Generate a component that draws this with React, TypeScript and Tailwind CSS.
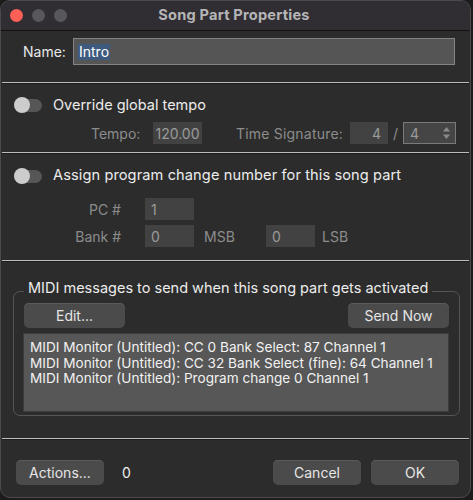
import React from "react";

const font = { fontFamily: "Inter, 'Noto Sans', sans-serif" };

function Toggle() {
    return (
        <div className="relative w-[28px] h-[16px] flex items-center">
            <div className="w-[28px] h-[13px] rounded-full bg-[#565656]" />
            <div className="absolute left-0 top-0 w-[16px] h-[16px] rounded-full bg-[#cdcdcd]" />
        </div>
    );
}

function Separator() {
    return <div className="h-[2px] border-t border-t-[#bdbdbd] border-b border-b-[#1c1c1c] mx-[1px]" />;
}

function Field({ value, className }: { value: string; className: string }) {
    return (
        <div className={`h-[22px] bg-[#424242] text-[#9a9a9a] text-[14px] flex items-center ${className}`}>
            {value}
        </div>
    );
}

function Button({ label, className }: { label: string; className: string }) {
    return (
        <button className={`h-[25px] rounded-[5px] bg-[#4b4b4b] text-[#e6e6e6] text-[14px] flex items-center justify-center shadow-[inset_0_1px_0_#5a5a5a] ${className}`}>
            {label}
        </button>
    );
}

export default function App() {
    return (
        <div className="w-[473px] h-[500px] bg-[#1c1c1c]" style={font}>
            <div className="w-[471px] h-[498px] rounded-[10px] overflow-hidden bg-[#2c2c2c] border border-[#4a4a4a] flex flex-col">
                <div className="h-[29px] shrink-0 bg-[#302e33] grid grid-cols-[1fr_auto_1fr] items-center border-b border-[#121212] box-content">
                    <div className="flex items-center gap-[9px] pl-[9px]">
                        <div className="w-[13px] h-[13px] rounded-full bg-[#fe5f57]" />
                        <div className="w-[13px] h-[13px] rounded-full bg-[#58575c]" />
                        <div className="w-[13px] h-[13px] rounded-full bg-[#58575c]" />
                    </div>
                    <div className="text-[14.6px] font-bold text-[#b5b5b7] tracking-[0.2px] -ml-[3px]">Song Part Properties</div>
                    <div />
                </div>

                <div className="h-[51px] shrink-0 flex items-start pt-[7px] pl-[22px]">
                    <span className="text-[14px] text-[#e8e8e8] leading-[27px] w-[50px]">Name:</span>
                    <div className="h-[27px] w-[382px] bg-[#555555] border border-[#838383] flex items-center pl-[4px]">
                        <span className="bg-[#3e5a7e] text-white text-[14px] leading-[16px] px-px">Intro</span>
                    </div>
                </div>
                <Separator />

                <div className="h-[68px] shrink-0 flex flex-col pl-[13px] pt-[12px]">
                    <div className="flex items-center gap-[11px] h-[18px]">
                        <Toggle />
                        <span className="text-[14.5px] text-[#ececec]">Override global tempo</span>
                    </div>
                    <div className="flex items-center mt-[8px] text-[14px] text-[#8c8c8c]">
                        <span className="ml-[77px] w-[62px]">Tempo:</span>
                        <Field value="120.00" className="w-[49px] justify-center" />
                        <span className="ml-[34px] w-[114px] tracking-[0.2px]">Time Signature:</span>
                        <Field value="4" className="w-[38px] justify-end pr-[7px]" />
                        <span className="w-[15px] text-center">/</span>
                        <div className="h-[22px] w-[53px] bg-[#454545] border border-[#7a7a7a] flex items-center justify-between pl-[6px] pr-[4px] text-[#9a9a9a]">
                            <span>4</span>
                            <svg width="9" height="14" viewBox="0 0 9 14" fill="#8a8a8a">
                                <path d="M4.5 1 L8 5.5 H1 Z" />
                                <path d="M4.5 13 L8 8.5 H1 Z" />
                            </svg>
                        </div>
                    </div>
                </div>
                <Separator />

                <div className="h-[106px] shrink-0 flex flex-col pl-[13px] pt-[13px] text-[14px] text-[#8c8c8c]">
                    <div className="flex items-center gap-[11px] h-[18px]">
                        <Toggle />
                        <span className="text-[14.6px] text-[#ececec] tracking-[0.1px]">Assign program change number for this song part</span>
                    </div>
                    <div className="flex items-center mt-[13px]">
                        <span className="w-[108px] text-right pr-[1px]">PC #</span>
                        <Field value="1" className="ml-[23px] w-[49px] pl-[6px]" />
                    </div>
                    <div className="flex items-center mt-[5px]">
                        <span className="w-[108px] text-right pr-[1px]">Bank #</span>
                        <Field value="0" className="ml-[23px] w-[49px] pl-[6px]" />
                        <span className="ml-[10px] w-[62px]">MSB</span>
                        <Field value="0" className="w-[49px] pl-[6px]" />
                        <span className="ml-[7px]">LSB</span>
                    </div>
                </div>
                <Separator />

                <div className="h-[176px] shrink-0 pt-[17px]">
                    <fieldset className="ml-[12px] w-[447px] h-[137px] border border-[#555555] rounded-[7px] px-[10px]">
                        <legend className="px-[4px] pb-[6px] text-[14.5px] leading-[18px] text-[#ececec]">
                            MIDI messages to send when this song part gets activated
                        </legend>
                        <div className="flex justify-between">
                            <Button label="Edit..." className="w-[101px]" />
                            <Button label="Send Now" className="w-[101px]" />
                        </div>
                        <div className="mt-[5px] -ml-px w-[426px] h-[79px] bg-[#575757] border border-[#3c3c3c] pl-[6px] pt-[6px] text-[13.6px] leading-[15.5px] text-[#f2f2f2]">
                            <div>MIDI Monitor (Untitled): CC 0 Bank Select: 87 Channel 1</div>
                            <div>MIDI Monitor (Untitled): CC 32 Bank Select (fine): 64 Channel 1</div>
                            <div>MIDI Monitor (Untitled): Program change 0 Channel 1</div>
                        </div>
                    </fieldset>
                </div>
                <Separator />

                <div className="flex-1 flex items-start pt-[20px] pl-[15px] pr-[11px]">
                    <Button label="Actions..." className="w-[88px]" />
                    <span className="ml-[18px] leading-[25px] text-[14px] text-[#ececec]">0</span>
                    <div className="ml-auto flex gap-[10px]">
                        <Button label="Cancel" className="w-[88px]" />
                        <Button label="OK" className="w-[88px]" />
                    </div>
                </div>
            </div>
        </div>
    );
}
